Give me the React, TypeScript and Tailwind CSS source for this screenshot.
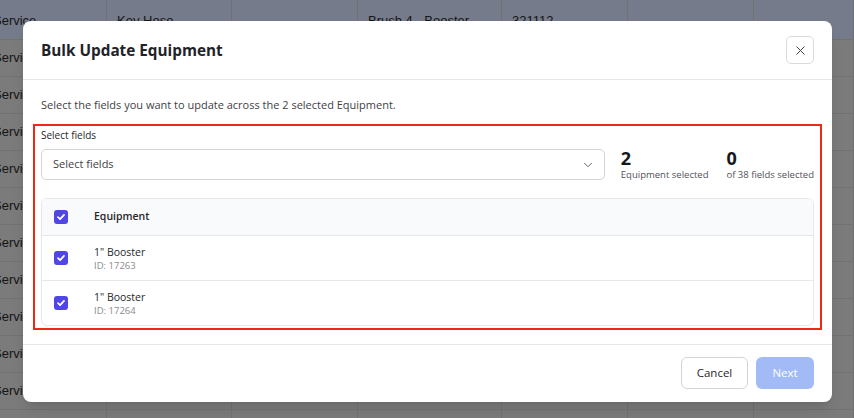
import React from "react";
import { ChevronDown, X } from "lucide-react";

const columns = [107, 125, 126, 144, 126, 126, 100];

type Row = { cells: string[]; tint?: boolean };

const rows: Row[] = [
  { cells: ["Service", "", "", "Hydrant", "", "", ""], tint: true },
  { cells: ["Service", "Key Hose", "", "Brush 4 - Booster", "321112", "", ""], tint: true },
  { cells: ["Service", "", "", "", "", "", ""] },
  { cells: ["Service", "", "", "", "", "", ""] },
  { cells: ["Service", "", "", "", "", "", ""] },
  { cells: ["Service", "", "", "", "", "", ""] },
  { cells: ["Service", "", "", "", "", "", ""] },
  { cells: ["Service", "", "", "", "", "", ""] },
  { cells: ["Service", "", "", "", "", "", ""] },
  { cells: ["Service", "", "", "", "", "", ""] },
  { cells: ["Service", "", "", "", "", "", ""] },
  { cells: ["Service", "", "", "", "", "", ""] },
  { cells: ["Service", "", "", "Brush 4 - Booster", "", "", ""] },
];

function Check() {
  return (
    <span className="flex h-[14px] w-[14px] shrink-0 items-center justify-center rounded-[3px] bg-[#4f46e5]">
      <svg width="10" height="10" viewBox="0 0 10 10" fill="none">
        <path d="M2 5.2 L4.1 7.2 L8 2.9" stroke="white" strokeWidth="1.8" strokeLinecap="round" strokeLinejoin="round" />
      </svg>
    </span>
  );
}

const equipment = [
  { name: '1" Booster', id: "17263" },
  { name: '1" Booster', id: "17264" },
];

export default function App() {
  return (
    <div className="relative h-[418px] w-[854px] overflow-hidden bg-[#7b7b7b] [font-family:'Open_Sans',sans-serif]">
      {/* dimmed list behind the dialog */}
      <div className="-mt-[34px] flex flex-col [font-family:'Liberation_Sans',Arial,sans-serif] text-[13px] text-[#151515]">
        {rows.map((r, i) => (
          <div
            key={i}
            className={`flex h-[37px] shrink-0 ${i === 0 ? "" : "border-b border-[#717171]"} ${r.tint ? "bg-[#767b8b]" : "bg-[#7b7b7b]"}`}
          >
            {r.cells.map((c, j) => (
              <div
                key={j}
                style={{ width: columns[j] }}
                className={`flex shrink-0 items-center overflow-hidden whitespace-nowrap border-r border-[#717171] ${j === 0 ? "pl-0" : "pl-[10px]"}`}
              >
                <span className={j === 0 ? "-ml-[7px]" : ""}>{c}</span>
              </div>
            ))}
          </div>
        ))}
      </div>

      {/* dialog */}
      <div className="absolute left-[23px] top-[21px] flex w-[809px] flex-col rounded-[8px] bg-white shadow-lg">
        <div className="flex h-[59px] items-center justify-between border-b border-[#e5e7eb] px-[18px]">
          <h2 className="text-[15.3px] font-bold text-[#1f2328]">Bulk Update Equipment</h2>
          <button className="flex h-[28px] w-[28px] items-center justify-center rounded-[5px] border border-[#d9dbe0] text-[#3f3f46]">
            <X size={15} strokeWidth={1.6} />
          </button>
        </div>

        <div className="flex flex-col px-[10px] pb-[14px] pt-[17px]">
          <p className="px-[8px] text-[11px] leading-[16px] text-[#3f3f46]">
            Select the fields you want to update across the 2 selected Equipment.
          </p>

          <div className="mt-[11px] flex flex-col border-2 border-[#ee2a12] px-[6px] pb-[2px] pt-[2px]">
            <label className="text-[10px] leading-[14px] text-[#27272a]">Select fields</label>
            <div className="mt-[6px] flex items-center gap-[16px]">
              <div className="flex h-[31px] flex-1 items-center justify-between rounded-[5px] border border-[#d4d4d8] pl-[11px] pr-[9px]">
                <span className="text-[11px] text-[#3f3f46]">Select fields</span>
                <ChevronDown size={14} strokeWidth={1.5} className="text-[#52525b]" />
              </div>
              <div className="flex gap-[18px]">
                <div className="flex flex-col">
                  <span className="text-[18px] font-bold leading-[20px] text-[#18181b]">2</span>
                  <span className="mt-[1px] text-[9.5px] leading-[12px] text-[#52525b]">Equipment selected</span>
                </div>
                <div className="flex flex-col">
                  <span className="text-[18px] font-bold leading-[20px] text-[#18181b]">0</span>
                  <span className="mt-[1px] text-[9.5px] leading-[12px] text-[#52525b]">of 38 fields selected</span>
                </div>
              </div>
            </div>

            <div className="mt-[17px] overflow-hidden rounded-[6px] border border-[#e5e7eb]">
              <div className="flex h-[36px] items-center bg-[#f9fafb] pl-[12px]">
                <Check />
                <span className="ml-[26px] text-[10.5px] font-semibold text-[#27272a]">Equipment</span>
              </div>
              {equipment.map((e) => (
                <div key={e.id} className="flex h-[45px] items-center border-t border-[#e5e7eb] pl-[12px]">
                  <Check />
                  <div className="ml-[26px] flex flex-col">
                    <span className="text-[10.5px] leading-[14px] text-[#27272a]">{e.name}</span>
                    <span className="text-[9.5px] leading-[13px] text-[#8a8a93]">ID: {e.id}</span>
                  </div>
                </div>
              ))}
            </div>
          </div>
        </div>

        <div className="flex h-[58px] items-center justify-end gap-[8px] border-t border-[#e5e7eb] px-[18px] pb-[2px]">
          <button className="h-[32px] w-[67px] rounded-[6px] border border-[#d4d4d8] text-[11.5px] text-[#27272a]">
            Cancel
          </button>
          <button className="h-[32px] w-[58px] rounded-[6px] bg-[#a2bbf6] text-[11.5px] font-medium text-white">
            Next
          </button>
        </div>
      </div>
    </div>
  );
}
